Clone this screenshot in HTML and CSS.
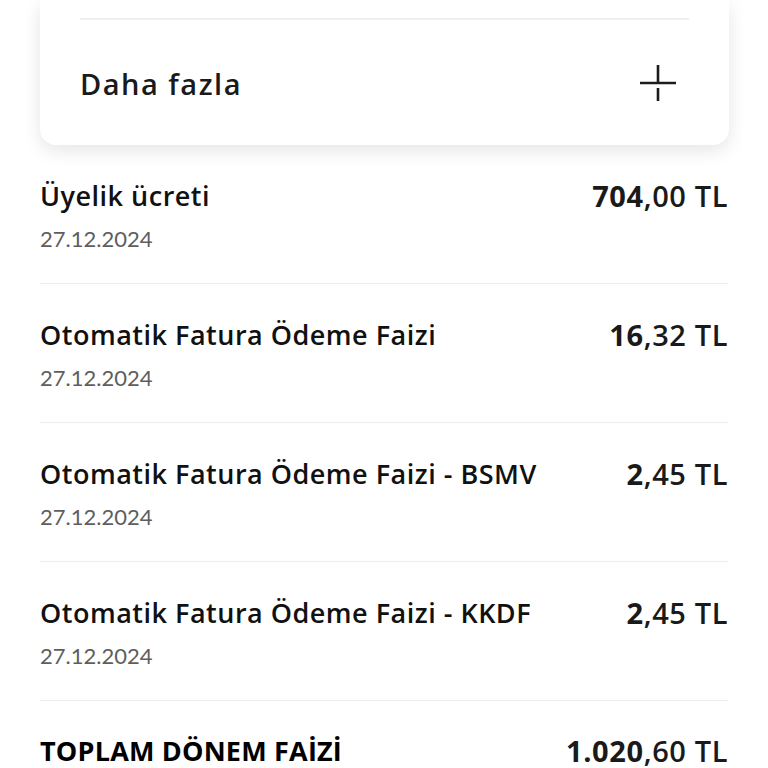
FILE: index.html
```html
<!DOCTYPE html>
<html lang="tr">
<head>
<meta charset="utf-8">
<link rel="stylesheet" href="styles.css">
</head>
<body>
<div class="card">
  <div class="card-divider"></div>
  <div class="more">
    <span class="more-label">Daha fazla</span>
    <svg class="plus" width="40" height="40" viewBox="0 0 40 40">
      <path d="M20 1V19M2 19H38M20 24V37" stroke="#1c1c1c" stroke-width="2.6" fill="none"/>
    </svg>
  </div>
</div>
<div class="list">
  <div class="row">
    <div class="info">
      <div class="title">Üyelik ücreti</div>
      <div class="date">27.12.2024</div>
    </div>
    <div class="amount"><b>704</b>,00 TL</div>
  </div>
  <div class="row">
    <div class="info">
      <div class="title">Otomatik Fatura Ödeme Faizi</div>
      <div class="date">27.12.2024</div>
    </div>
    <div class="amount"><b>16</b>,32 TL</div>
  </div>
  <div class="row">
    <div class="info">
      <div class="title">Otomatik Fatura Ödeme Faizi - BSMV</div>
      <div class="date">27.12.2024</div>
    </div>
    <div class="amount"><b>2</b>,45 TL</div>
  </div>
  <div class="row">
    <div class="info">
      <div class="title">Otomatik Fatura Ödeme Faizi - KKDF</div>
      <div class="date">27.12.2024</div>
    </div>
    <div class="amount"><b>2</b>,45 TL</div>
  </div>
  <div class="row total">
    <div class="info">
      <div class="title">TOPLAM DÖNEM FAİZİ</div>
    </div>
    <div class="amount"><b>1.020</b>,60 TL</div>
  </div>
</div>
</body>
</html>
```
FILE: styles.css
```css
html, body {
  margin: 0;
  padding: 0;
  background: #ffffff;
  font-family: "Open Sans", "Noto Sans", sans-serif;
  color: #1a1a1a;
  overflow: hidden;
}
.card {
  margin: 0 39px 0 40px;
  padding: 18px 40px 0;
  background: #fff;
  border-radius: 0 0 16px 16px;
  box-shadow: 0 6px 18px rgba(0, 0, 0, 0.10);
}
.card-divider {
  height: 2px;
  background: #efefef;
}
.more {
  height: 125px;
  display: flex;
  align-items: center;
  justify-content: space-between;
}
.more-label {
  font-size: 29px;
  font-weight: 600;
  letter-spacing: 1.5px;
  margin-top: 2px;
}
.plus {
  margin-right: 11px;
  margin-top: 2px;
}
.list {
  margin: 0 40px;
}
.row {
  display: flex;
  justify-content: space-between;
  align-items: flex-start;
  padding: 35px 0 30px;
  border-bottom: 1.5px solid #ececec;
}
.title {
  font-size: 27px;
  line-height: 32px;
  font-weight: 600;
  letter-spacing: 0.5px;
  color: #111;
}
.date {
  margin-top: 13px;
  font-family: "Lato", sans-serif;
  font-size: 22px;
  line-height: 28px;
  color: #5e5e5e;
}
.amount {
  font-size: 29px;
  line-height: 32px;
  font-weight: 600;
  letter-spacing: 0.6px;
  color: #1a1a1a;
  white-space: nowrap;
}
.amount b {
  font-weight: 700;
}
.total {
  border-bottom: none;
  padding-top: 34px;
}
.total .title {
  font-weight: 700;
  letter-spacing: 0.2px;
  color: #000;
}
```
